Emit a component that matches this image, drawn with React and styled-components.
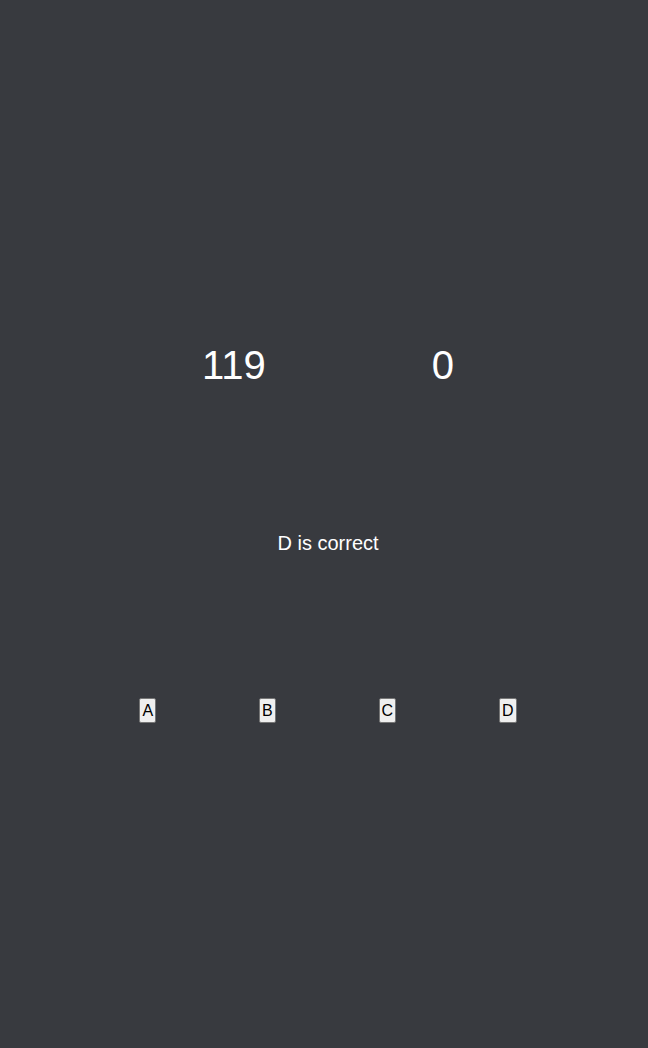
import React from "react";
import styled, { createGlobalStyle } from "styled-components";

const GlobalStyle = createGlobalStyle`
  html, body {
    margin: 0;
    background: #383a3f;
  }
  body {
    font-family: "Liberation Sans", Arial, sans-serif;
  }
`;

const Page = styled.div`
  min-height: 1048px;
  padding-left: 8px;
  display: flex;
  flex-direction: column;
  align-items: center;
  color: #ffffff;
`;

const Scores = styled.div`
  margin-top: 342px;
  display: flex;
  justify-content: center;
  gap: 166px;
`;

const Score = styled.div`
  font-size: 40px;
  line-height: 46px;
`;

const Result = styled.div`
  margin-top: 144px;
  font-size: 20px;
  line-height: 23px;
`;

const Choices = styled.div`
  margin-top: 143px;
  width: 480px;
  display: flex;
  justify-content: space-around;
`;

const Choice = styled.button`
  font-family: "Liberation Sans", Arial, sans-serif;
  font-size: 16px;
  line-height: 19px;
  padding: 2px 2px;
  color: #000;
  background: #efefef;
  border: 1px solid #767676;
  border-radius: 2px;
`;

export default function App() {
  const choices = ["A", "B", "C", "D"];
  return (
    <>
      <GlobalStyle />
      <Page>
        <Scores>
          <Score>119</Score>
          <Score>0</Score>
        </Scores>
        <Result>D is correct</Result>
        <Choices>
          {choices.map((c) => (
            <Choice key={c}>{c}</Choice>
          ))}
        </Choices>
      </Page>
    </>
  );
}
